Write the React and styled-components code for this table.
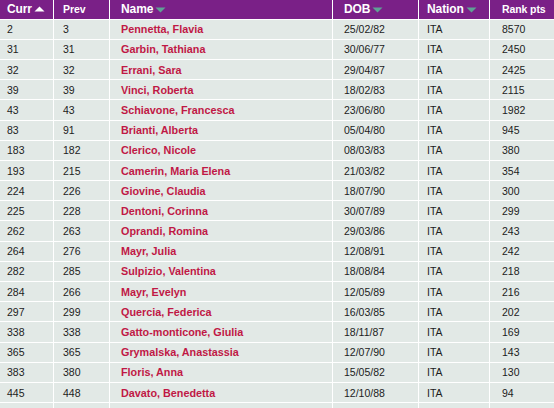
import React from "react";
import styled, { createGlobalStyle } from "styled-components";

const Global = createGlobalStyle`
  html, body { margin: 0; padding: 0; background: #ffffff; }
  body { font-family: "Liberation Sans", Arial, Helvetica, sans-serif; overflow: hidden; }
`;

const COLS = "53px 55px 222px 85px 70px 64px";

const Table = styled.div`
  width: 554px;
  display: flex;
  flex-direction: column;
  gap: 1px;
  background: #ffffff;
`;

const HeadRow = styled.div`
  display: grid;
  grid-template-columns: ${COLS};
  column-gap: 1px;
  height: 18.6px;
`;

const HeadCell = styled.div`
  background: #7a2087;
  color: #ffffff;
  font-weight: bold;
  font-size: ${(p) => (p.$small ? "10.5px" : "12px")};
  padding-left: ${(p) => p.$pad}px;
  display: flex;
  align-items: center;
  gap: 2px;
  white-space: nowrap;
  letter-spacing: -0.1px;
`;

const Row = styled.div`
  display: grid;
  grid-template-columns: ${COLS};
  column-gap: 1px;
  height: 19.2px;
`;

const Cell = styled.div`
  background: #e2e9e6;
  color: #1c1c1c;
  font-size: 10.5px;
  padding-left: ${(p) => p.$pad}px;
  display: flex;
  align-items: center;
  white-space: nowrap;
`;

const NameCell = styled(Cell)`
  color: #c01845;
  font-weight: bold;
  font-size: 10.8px;
`;

const Arrow = ({ up }) => (
  <svg width="11" height="6" viewBox="0 0 11 6" style={{ marginTop: up ? -1 : 1 }}>
    {up ? (
      <polygon points="0.5,5.5 5.5,0.5 10.5,5.5" fill="#ffffff" />
    ) : (
      <polygon points="0.5,0.5 10.5,0.5 5.5,5.5" fill="#5fa095" />
    )}
  </svg>
);

const data = [
  ["2", "3", "Pennetta, Flavia", "25/02/82", "ITA", "8570"],
  ["31", "31", "Garbin, Tathiana", "30/06/77", "ITA", "2450"],
  ["32", "32", "Errani, Sara", "29/04/87", "ITA", "2425"],
  ["39", "39", "Vinci, Roberta", "18/02/83", "ITA", "2115"],
  ["43", "43", "Schiavone, Francesca", "23/06/80", "ITA", "1982"],
  ["83", "91", "Brianti, Alberta", "05/04/80", "ITA", "945"],
  ["183", "182", "Clerico, Nicole", "08/03/83", "ITA", "380"],
  ["193", "215", "Camerin, Maria Elena", "21/03/82", "ITA", "354"],
  ["224", "226", "Giovine, Claudia", "18/07/90", "ITA", "300"],
  ["225", "228", "Dentoni, Corinna", "30/07/89", "ITA", "299"],
  ["262", "263", "Oprandi, Romina", "29/03/86", "ITA", "243"],
  ["264", "276", "Mayr, Julia", "12/08/91", "ITA", "242"],
  ["282", "285", "Sulpizio, Valentina", "18/08/84", "ITA", "218"],
  ["284", "266", "Mayr, Evelyn", "12/05/89", "ITA", "216"],
  ["297", "299", "Quercia, Federica", "16/03/85", "ITA", "202"],
  ["338", "338", "Gatto-monticone, Giulia", "18/11/87", "ITA", "169"],
  ["365", "365", "Grymalska, Anastassia", "12/07/90", "ITA", "143"],
  ["383", "380", "Floris, Anna", "15/05/82", "ITA", "130"],
  ["445", "448", "Davato, Benedetta", "12/10/88", "ITA", "94"],
  ["", "", "", "", "", ""],
];

const PADS = [7, 9, 11, 11, 8, 12];

export default function App() {
  return (
    <>
      <Global />
      <Table>
        <HeadRow>
          <HeadCell $pad={PADS[0]}>
            Curr <Arrow up />
          </HeadCell>
          <HeadCell $pad={PADS[1]} $small>
            Prev
          </HeadCell>
          <HeadCell $pad={PADS[2]}>
            Name<Arrow />
          </HeadCell>
          <HeadCell $pad={PADS[3]}>
            DOB<Arrow />
          </HeadCell>
          <HeadCell $pad={PADS[4]}>
            Nation<Arrow />
          </HeadCell>
          <HeadCell $pad={PADS[5]} $small>
            Rank pts
          </HeadCell>
        </HeadRow>
        {data.map((r, i) => (
          <Row key={i}>
            <Cell $pad={PADS[0]}>{r[0]}</Cell>
            <Cell $pad={PADS[1]}>{r[1]}</Cell>
            <NameCell $pad={PADS[2]}>{r[2]}</NameCell>
            <Cell $pad={PADS[3]}>{r[3]}</Cell>
            <Cell $pad={PADS[4]}>{r[4]}</Cell>
            <Cell $pad={PADS[5]}>{r[5]}</Cell>
          </Row>
        ))}
      </Table>
    </>
  );
}
